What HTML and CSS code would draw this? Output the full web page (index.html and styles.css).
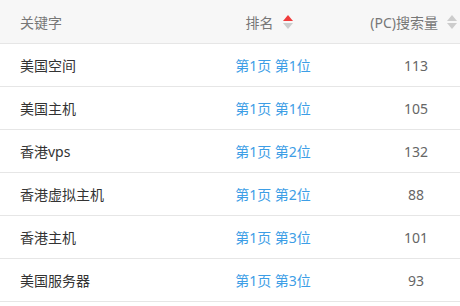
FILE: index.html
```html
<!DOCTYPE html>
<html>
	<head>
		<meta charset="utf-8">
		<title>关键字排名</title>
		<link rel="stylesheet" href="styles.css">
	</head>
	<body>
		<div class="tabela">
			<div class="linha cabecalho">
				<div class="col col1">关键字</div>
				<div class="col col2">排名 <span class="ordem ativo"><i class="up"></i><i class="down"></i></span></div>
				<div class="col col3">(PC)搜索量 <span class="ordem"><i class="up"></i><i class="down"></i></span></div>
			</div>
			<div class="linha">
				<div class="col col1">美国空间</div>
				<div class="col col2 rank">第1页 第1位</div>
				<div class="col col3 num">113</div>
			</div>
			<div class="linha">
				<div class="col col1">美国主机</div>
				<div class="col col2 rank">第1页 第1位</div>
				<div class="col col3 num">105</div>
			</div>
			<div class="linha">
				<div class="col col1">香港vps</div>
				<div class="col col2 rank">第1页 第2位</div>
				<div class="col col3 num">132</div>
			</div>
			<div class="linha">
				<div class="col col1">香港虚拟主机</div>
				<div class="col col2 rank">第1页 第2位</div>
				<div class="col col3 num">88</div>
			</div>
			<div class="linha">
				<div class="col col1">香港主机</div>
				<div class="col col2 rank">第1页 第3位</div>
				<div class="col col3 num">101</div>
			</div>
			<div class="linha">
				<div class="col col1">美国服务器</div>
				<div class="col col2 rank">第1页 第3位</div>
				<div class="col col3 num">93</div>
			</div>
		</div>
	</body>
</html>
```
FILE: styles.css
```css
body {
	margin: 0;
	background: #fff;
	font-family: "Noto Sans", "Noto Sans CJK SC", sans-serif;
	font-size: 14px;
	color: #333;
}

.tabela {
	width: 460px;
}

.linha {
	display: grid;
	grid-template-columns: 215px 116px 1fr;
	height: 42px;
	border-bottom: 1px solid #e6e6e6;
	align-items: center;
}

.cabecalho {
	height: 43px;
	background: #f7f7f7;
	color: #777;
}

.col {
	display: flex;
	align-items: center;
	white-space: nowrap;
}

.col1 {
	padding-left: 20px;
}

.col2 {
	justify-content: center;
}

.col3 {
	padding-left: 41px;
	justify-content: center;
}

.cabecalho .col2 {
	padding-right: 8px;
}

.cabecalho .col3 {
	padding-left: 0;
	padding-right: 3px;
	justify-content: flex-end;
}

.rank {
	color: #3d9ee6;
}

.num {
	color: #666;
}

.ordem {
	display: inline-flex;
	flex-direction: column;
	margin-left: 9px;
	gap: 2px;
}

.ordem i {
	width: 0;
	height: 0;
	border-left: 5px solid transparent;
	border-right: 5px solid transparent;
}

.ordem .up {
	border-bottom: 6px solid #ccc;
}

.ordem .down {
	border-top: 6px solid #ccc;
}

.ordem.ativo .up {
	border-bottom-color: #f03c3c;
}
```
